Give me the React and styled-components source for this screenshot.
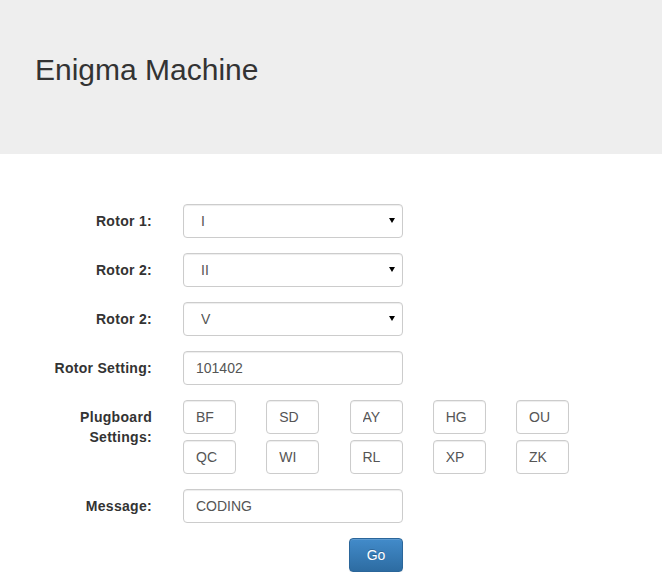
import React from "react";
import styled, { createGlobalStyle } from "styled-components";

const GlobalStyle = createGlobalStyle`
  html, body {
    margin: 0;
    padding: 0;
    background: #fff;
  }
  body {
    font-family: "Liberation Sans", Arial, Helvetica, sans-serif;
    font-size: 14px;
    line-height: 20px;
    color: #333;
  }
  * {
    box-sizing: border-box;
  }
`;

const rotors = [
  { label: "Rotor 1:", value: "I" },
  { label: "Rotor 2:", value: "II" },
  { label: "Rotor 2:", value: "V" },
];

const plugs = ["BF", "SD", "AY", "HG", "OU", "QC", "WI", "RL", "XP", "ZK"];

const App = () => {
  return (
    <React.Fragment>
      <GlobalStyle />
      <Jumbotron>
        <Title>Enigma Machine</Title>
      </Jumbotron>
      <Form onSubmit={(e) => e.preventDefault()}>
        {rotors.map((r, i) => (
          <Row key={i}>
            <Label>{r.label}</Label>
            <SelectWrap>
              <Select defaultValue={r.value}>
                <option>I</option>
                <option>II</option>
                <option>III</option>
                <option>IV</option>
                <option>V</option>
              </Select>
            </SelectWrap>
          </Row>
        ))}
        <Row>
          <Label>Rotor Setting:</Label>
          <Input defaultValue="101402" />
        </Row>
        <Row>
          <Label>
            Plugboard
            <br />
            Settings:
          </Label>
          <PlugGrid>
            {plugs.map((p) => (
              <PlugInput key={p} defaultValue={p} />
            ))}
          </PlugGrid>
        </Row>
        <Row>
          <Label>Message:</Label>
          <Input defaultValue="CODING" />
        </Row>
        <Row>
          <div></div>
          <ButtonCell>
            <GoButton type="submit">Go</GoButton>
          </ButtonCell>
        </Row>
      </Form>
    </React.Fragment>
  );
};

const Jumbotron = styled.div`
  background-color: #eee;
  height: 154px;
  padding: 53px 35px 0;
`;

const Title = styled.h2`
  margin: 0;
  font-size: 30px;
  line-height: 33px;
  font-weight: 400;
  color: #333;
`;

const Form = styled.form`
  padding-top: 50px;
  display: flex;
  flex-direction: column;
  gap: 15px;
`;

const Row = styled.div`
  display: grid;
  grid-template-columns: 152px 220px;
  column-gap: 31px;
`;

const Label = styled.label`
  padding-top: 7px;
  text-align: right;
  font-weight: 700;
  letter-spacing: 0.3px;
  color: #333;
`;

const controlBase = `
  display: block;
  height: 34px;
  padding: 6px 12px;
  font-family: "Liberation Sans", Arial, Helvetica, sans-serif;
  font-size: 14px;
  line-height: 20px;
  color: #555;
  background-color: #fff;
  border: 1px solid #ccc;
  border-radius: 4px;
  box-shadow: inset 0 1px 1px rgba(0, 0, 0, 0.075);
  outline: none;
`;

const Input = styled.input`
  ${controlBase}
  width: 220px;
`;

const SelectWrap = styled.div`
  position: relative;
  width: 220px;
  &::after {
    content: "";
    position: absolute;
    right: 8px;
    top: 14px;
    border-left: 3px solid transparent;
    border-right: 3px solid transparent;
    border-top: 5px solid #000;
    pointer-events: none;
  }
`;

const Select = styled.select`
  ${controlBase}
  width: 100%;
  padding-left: 17px;
  appearance: none;
  -webkit-appearance: none;
`;

const PlugGrid = styled.div`
  display: grid;
  grid-template-columns: repeat(5, 53px);
  column-gap: 30.25px;
  row-gap: 6px;
`;

const PlugInput = styled.input`
  ${controlBase}
  width: 53px;
`;

const ButtonCell = styled.div`
  display: flex;
  justify-content: flex-end;
`;

const GoButton = styled.button`
  width: 54px;
  height: 34px;
  padding: 6px 12px;
  font-family: "Liberation Sans", Arial, Helvetica, sans-serif;
  font-size: 14px;
  line-height: 20px;
  color: #fff;
  text-shadow: 0 -1px 0 rgba(0, 0, 0, 0.2);
  background-image: linear-gradient(to bottom, #428bca 0, #2d6ca2 100%);
  border: 1px solid #2b669a;
  border-radius: 4px;
  box-shadow: inset 0 1px 0 rgba(255, 255, 255, 0.15), 0 1px 1px rgba(0, 0, 0, 0.075);
  cursor: pointer;
`;

export default App;
